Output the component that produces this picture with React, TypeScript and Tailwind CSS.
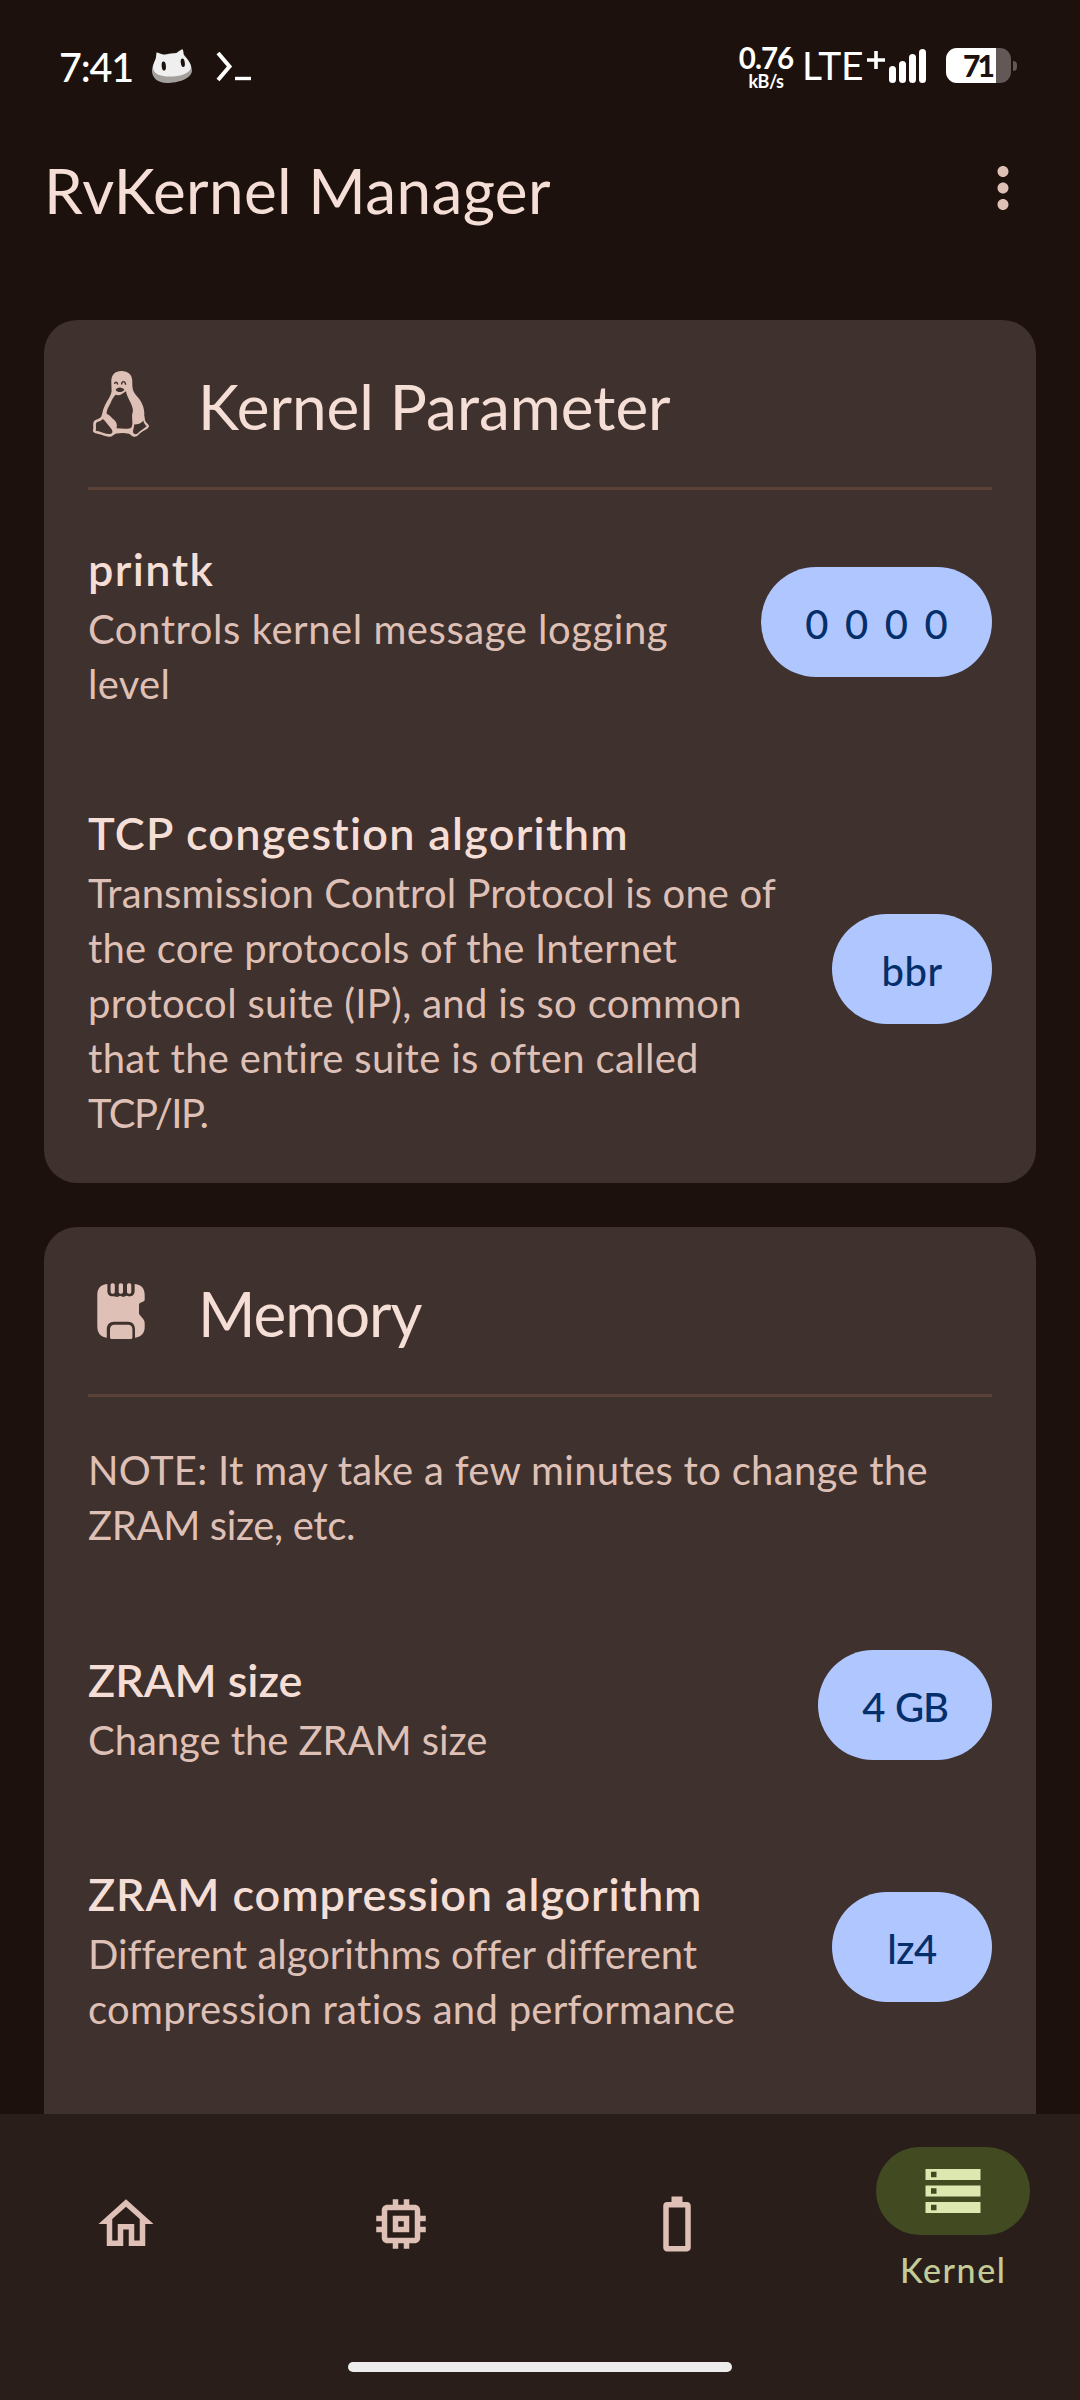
import type { ReactNode } from 'react'

type TextLine = { text: string; tracking: string }

const ICON_PATHS = {
  home: 'M12 5.69l5 4.5V18h-2v-6H9v6H7v-7.81l5-4.5M12 3L2 12h3v8h6v-6h2v6h6v-8h3L12 3z',
  chip: 'M15 9H9v6h6V9zm-2 4h-2v-2h2v2zm8-2V9h-2V7c0-1.1-.9-2-2-2h-2V3h-2v2h-2V3H9v2H7c-1.1 0-2 .9-2 2v2H3v2h2v2H3v2h2v2c0 1.1.9 2 2 2h2v2h2v-2h2v2h2v-2h2c1.1 0 2-.9 2-2v-2h2v-2h-2v-2h2zm-4 6H7V7h10v10z',
  battery:
    'M15.67 4H14V2h-4v2H8.33C7.6 4 7 4.6 7 5.33v15.33C7 21.4 7.6 22 8.33 22h7.33c.74 0 1.34-.6 1.34-1.33V5.33C17 4.6 16.4 4 15.67 4zM15 20H9V6h6v14z',
  storage:
    'M2 20h20v-4H2v4zm2-3h2v2H4v-2zM2 4v4h20V4H2zm4 3H4V5h2v2zm-4 7h20v-4H2v4zm2-3h2v2H4v-2z',
  more: 'M12 8c1.1 0 2-.9 2-2s-.9-2-2-2-2 .9-2 2 .9 2 2 2zm0 2c-1.1 0-2 .9-2 2s.9 2 2 2 2-.9 2-2-.9-2-2-2zm0 6c-1.1 0-2 .9-2 2s.9 2 2 2 2-.9 2-2-.9-2-2-2z',
}

function Icon({ d }: { d: string }) {
  return (
    <svg viewBox="0 0 24 24" className="size-[66px] shrink-0 fill-current">
      <path d={d} />
    </svg>
  )
}

function TuxIcon() {
  return (
    <svg viewBox="0 0 66 66" className="size-[66px] shrink-0 fill-[#dfc0b6]">
      <path
        fillRule="evenodd"
        d="M33.5 0C27 0 23.3 4 23.3 10.5L23.6 20C23 25.500 18.500 30 16 36.500C14.500 40 14.300 43 13.300 45.500C11 48.500 8 48 6 50.300C4.300 53 6 56 4.900 59.500C5 62.500 9 62.300 13.500 63.800C17 65 20 66.600 23.500 65.400C25.500 64.600 26.500 63 28.500 62.600C33 61.800 37 61.900 41 62.700C43 63.400 43.500 65.500 46 65.800C49 66 50.500 63.500 53 61.500C56 59.300 59.500 58.500 61 55.800C61.500 53.500 58.500 52.500 57.300 50C56.500 48 57 46.500 56.200 44.500C57 38 54 31 50 26.500C46.500 22.500 44.600 20 44.400 15.500L44.200 9C43.800 3.500 40 0 33.500 0ZM27.500 23.800C29.500 24.500 31.500 24.600 33.500 23.300L38 20.300C38.500 24 40.500 27.500 42.500 31.500C44.500 36 45.500 39 44.500 42C43 46 46 53.500 43 57C38.500 58.500 33 57.500 28.500 57.300C30 52 27 49.500 24.500 47.500C23 46 21.500 43.500 18.700 43C18.500 38 21.500 35 23 31C24.300 27.500 26 26 27.500 23.800ZM14.800 48C17.500 50 20 54 23 57.500C25 60 25 62.500 22 63C18 63.300 13 60.500 7.700 59.700C8.500 56.500 7.300 54 8.300 51.800C10.500 50 12.500 50.500 14.800 48ZM46 53.500C49.500 53.500 53.500 52.500 55.200 49.500C56 53 57.500 53.700 58.600 55.300C56 58 52 59.500 49.500 62.500C47.500 64 45.300 63 45 61C45 58 46.500 56 46 53.500Z"
      />
      <path
        className="fill-[#3f312d]"
        d="M27.600 18.800C28.500 17 31 15.800 33 16.700C35 17.300 36.500 18.200 36.300 18.900C34.500 20.600 32.500 21.500 30.500 20.900C29.300 20.700 28 20 27.600 18.800Z"
      />
      <path
        fill="none"
        stroke="#3f312d"
        strokeWidth="1.400"
        d="M26.600 13C26.600 11 29 10 29.800 13.500M33.600 13.500C33.600 9.800 37.300 9.500 37.600 13.800"
      />
    </svg>
  )
}

function SdCardIcon() {
  return (
    <svg viewBox="0 0 66 66" className="size-[66px] shrink-0 fill-[#dfc0b6]">
      <path d="M19.600 6C13 6.500 9.300 10 9.300 17V48C9.300 55 12.500 59 18.800 59.700V51.500C18.800 46.500 21.500 43.700 26 43.700H40C44.500 43.700 47 46.500 47 51.500V59.700C53.500 59 56.700 55 56.700 49V46C56.700 43.500 56.300 42.300 54.800 40.500L52 37.300C51.200 36.400 51 35.800 51 34.800V27.500C51 25.800 51.500 25 53 24.500L55.300 23.600C56.300 23.200 56.700 22.600 56.700 21.500V17C56.700 10 53 6.500 46.400 6V13.500C46.400 17.800 42.500 19.500 38.800 17.500C36.500 19 34 19 31.800 17.500C30 19 27.500 19 25.500 18.300C21.500 18.800 19.600 16.500 19.600 13.500Z" />
      <path className="fill-[#3f312d]" d="M19.600 5H46.400V13C46.400 17.500 42.500 19.500 38.800 17.300C36.500 19 34 19 32.500 17.500C30.500 19 28.500 19 26.500 17.500C22 19 19.600 16 19.600 13Z" />
      <rect x="22.600" y="5.300" width="4.200" height="10.500" rx="1.800" />
      <rect x="30.700" y="5.300" width="4.300" height="10.500" rx="1.800" />
      <rect x="39" y="5.300" width="4.300" height="10.500" rx="1.800" />
      <path d="M22 52C22 48.500 23.500 46.700 27 46.700H39.500C43 46.700 44.400 48.500 44.400 52V59C44.400 60.400 43.800 61 42.500 61H24C22.600 61 22 60.400 22 59Z" />
    </svg>
  )
}

function CatIcon() {
  return (
    <svg viewBox="0 0 40 35" className="h-[35px] w-[40px]">
      <path
        fill="#a3a09e"
        d="M0 22C0 16 4 10 6 7C12 5 30 2 33 7C37 12 40 17 40 22C39 30 26 34 15 34C6 34 0 29 0 22Z"
      />
      <path
        fill="#efefef"
        d="M1 18C1.500 14 4 10 4 8L4.500 3.500C5 3 9 4.800 12.500 6C17 5 21 4.500 24.500 4C27 2 29.500 .200 30.500 .200C31.500 1.500 31.500 4.500 32 6.500C35.500 10 39.500 15 39 19C37.500 25 27 27.500 18 27.500C8 27.500 1 25 1 18Z"
      />
      <ellipse cx="11.800" cy="17" rx="2.100" ry="4.600" fill="#1c110d" transform="rotate(-5 11.800 17)" />
      <ellipse cx="30.800" cy="13.800" rx="2" ry="4.300" fill="#1c110d" transform="rotate(-8 30.800 13.800)" />
    </svg>
  )
}

function StatusBar() {
  return (
    <header className="flex h-[132px] shrink-0 items-start text-white">
      <span className="mt-[43px] ml-[59px] w-[93px] shrink-0 text-[39.500px] leading-[48px] font-medium tracking-[-1.200px]">
        7:41
      </span>
      <div className="mt-[49px]">
        <CatIcon />
      </div>
      <svg viewBox="0 0 36 30" className="mt-[52px] ml-[24px] h-[30px] w-[36px]" fill="none" stroke="#fff">
        <path d="M2 1L13.500 14.500L2 28" strokeWidth="4" />
        <path d="M19 26.500H35" strokeWidth="3.400" />
      </svg>
      <div className="mt-[43px] ml-[485px] flex w-[58px] shrink-0 flex-col items-center font-bold">
        <span className="text-[29.500px] leading-[30px] tracking-[-1px]">0.76</span>
        <span className="text-[18px] leading-[17px] tracking-[-0.500px]">kB/s</span>
      </div>
      <span className="mt-[41px] ml-[7px] w-[65px] shrink-0 text-[39px] leading-[48px] tracking-[-0.200px]">LTE</span>
      <svg viewBox="0 0 18 18" className="mt-[51px] size-[18px] shrink-0" stroke="#fff" strokeWidth="3.600">
        <path d="M9 0V18M0 9H18" />
      </svg>
      <div className="mt-[49px] ml-[4px] flex h-[34px] shrink-0 items-end gap-[3px]">
        <div className="h-[17px] w-[7px] rounded-full bg-white" />
        <div className="h-[22px] w-[7px] rounded-full bg-white" />
        <div className="h-[29px] w-[7px] rounded-full bg-white" />
        <div className="h-[34px] w-[7px] rounded-full bg-white" />
      </div>
      <div className="mt-[48px] ml-[20px] flex h-[35px] w-[65px] shrink-0 overflow-hidden rounded-[11px] bg-[#625855]">
        <span className="w-[50px] bg-white pl-[17px] text-[30px] leading-[35px] font-black tracking-[-3px] text-[#1c110d]">
          71
        </span>
      </div>
      <div className="mt-[61px] ml-[2px] h-[10px] w-[4px] shrink-0 rounded-r-full bg-[#625855]" />
    </header>
  )
}

function Lines({ lines }: { lines: TextLine[] }) {
  return (
    <p className="relative top-[2px] text-[40px] leading-[55px] whitespace-nowrap text-[#dfc0b6]">
      {lines.map((line) => (
        <span key={line.text} className={`block ${line.tracking}`}>
          {line.text}
        </span>
      ))}
    </p>
  )
}

function Setting({
  title,
  lines,
  children,
}: {
  title: TextLine
  lines: TextLine[]
  children: ReactNode
}) {
  return (
    <div className="flex min-h-[132px] items-center justify-between">
      <div>
        <h3
          className={`relative top-[2px] text-[45px] leading-[66px] font-semibold whitespace-nowrap text-[#f5ded6] ${title.tracking}`}
        >
          {title.text}
        </h3>
        <Lines lines={lines} />
      </div>
      {children}
    </div>
  )
}

function Pill({ className, children }: { className: string; children: ReactNode }) {
  return (
    <button
      className={`h-[110px] shrink-0 rounded-full bg-[#afc6ff] pt-[5px] text-center text-[40px] leading-[55px] font-medium text-[#052f6b] ${className}`}
    >
      {children}
    </button>
  )
}

function Card({
  icon,
  title,
  tracking,
  className = 'pb-[44px]',
  children,
}: {
  icon: ReactNode
  title: string
  tracking: string
  className?: string
  children: ReactNode
}) {
  return (
    <section className={`shrink-0 rounded-[33px] bg-[#3f312d] px-[44px] pt-[44px] ${className}`}>
      <div className="flex h-[80px] items-center gap-[44px]">
        {icon}
        <h2 className={`pt-[4px] text-[62px] leading-[76px] text-[#f5ded6] ${tracking}`}>{title}</h2>
      </div>
      <div className="mt-[43px] mb-[44px] h-[3px] bg-[#5a4239]" />
      <div className="flex flex-col gap-[88px]">{children}</div>
    </section>
  )
}

function NavItem({ d }: { d: string }) {
  return (
    <div className="flex h-[220px] items-center justify-center pr-[2px] text-[#dfc0b6]">
      <Icon d={d} />
    </div>
  )
}

export default function App() {
  return (
    <div className="flex h-[2400px] w-[1080px] flex-col overflow-hidden bg-[#1c110d] font-['Lato','Noto_Sans',sans-serif]">
      <StatusBar />
      <div className="flex h-[112px] shrink-0 items-center justify-between pr-[44px] pl-[44px] text-[#dfc0b6]">
        <h1 className="pt-[4px] text-[62px] leading-[78px] tracking-[0.380px] text-[#f5ded6]">RvKernel Manager</h1>
        <Icon d={ICON_PATHS.more} />
      </div>

      <main className="flex min-h-0 flex-1 flex-col gap-[44px] overflow-hidden px-[44px] pt-[76px]">
        <Card icon={<TuxIcon />} title="Kernel Parameter" tracking="tracking-[0px]">
          <Setting
            title={{ text: 'printk', tracking: 'tracking-[1.400px]' }}
            lines={[
              { text: 'Controls kernel message logging', tracking: 'tracking-[0.540px]' },
              { text: 'level', tracking: 'tracking-[0.300px]' },
            ]}
          >
            <Pill className="w-[231px] [word-spacing:6.500px]">0 0 0 0</Pill>
          </Setting>
          <Setting
            title={{ text: 'TCP congestion algorithm', tracking: 'tracking-[1.250px]' }}
            lines={[
              { text: 'Transmission Control Protocol is one of', tracking: 'tracking-[0.100px]' },
              { text: 'the core protocols of the Internet', tracking: 'tracking-[0.190px]' },
              { text: 'protocol suite (IP), and is so common', tracking: 'tracking-[0.330px]' },
              { text: 'that the entire suite is often called', tracking: 'tracking-[0.330px]' },
              { text: 'TCP/IP.', tracking: 'tracking-[-1.500px]' },
            ]}
          >
            <Pill className="w-[160px] tracking-[0.500px]">bbr</Pill>
          </Setting>
        </Card>

        <Card icon={<SdCardIcon />} title="Memory" tracking="tracking-[-1.100px]" className="pb-[132px]">
          <Lines
            lines={[
              { text: 'NOTE: It may take a few minutes to change the', tracking: 'tracking-[0.310px]' },
              { text: 'ZRAM size, etc.', tracking: 'tracking-[-0.360px]' },
            ]}
          />
          <Setting
            title={{ text: 'ZRAM size', tracking: 'tracking-[-0.050px]' }}
            lines={[{ text: 'Change the ZRAM size', tracking: 'tracking-[-0.060px]' }]}
          >
            <Pill className="w-[174px] tracking-[-1.200px] [word-spacing:2px]">4 GB</Pill>
          </Setting>
          <Setting
            title={{ text: 'ZRAM compression algorithm', tracking: 'tracking-[0.890px]' }}
            lines={[
              { text: 'Different algorithms offer different', tracking: 'tracking-[-0.020px]' },
              { text: 'compression ratios and performance', tracking: 'tracking-[0.290px]' },
            ]}
          >
            <Pill className="w-[160px] tracking-[-0.500px]">lz4</Pill>
          </Setting>
        </Card>
      </main>

      <nav className="h-[286px] shrink-0 bg-[#291e19]">
        <div className="grid grid-cols-4 gap-[22px]">
          <NavItem d={ICON_PATHS.home} />
          <NavItem d={ICON_PATHS.chip} />
          <NavItem d={ICON_PATHS.battery} />
          <div className="flex h-[220px] flex-col items-center pt-[33px]">
            <div className="flex h-[88px] w-[154px] items-center justify-center rounded-full bg-[#424a22] text-[#dde8b0]">
              <Icon d={ICON_PATHS.storage} />
            </div>
            <span className="mt-[13px] text-[34px] leading-[44px] font-medium tracking-[1.600px] text-[#c3cc97]">
              Kernel
            </span>
          </div>
        </div>
        <div className="mx-auto mt-[28px] h-[10px] w-[384px] rounded-full bg-[#ededed]" />
      </nav>
    </div>
  )
}
